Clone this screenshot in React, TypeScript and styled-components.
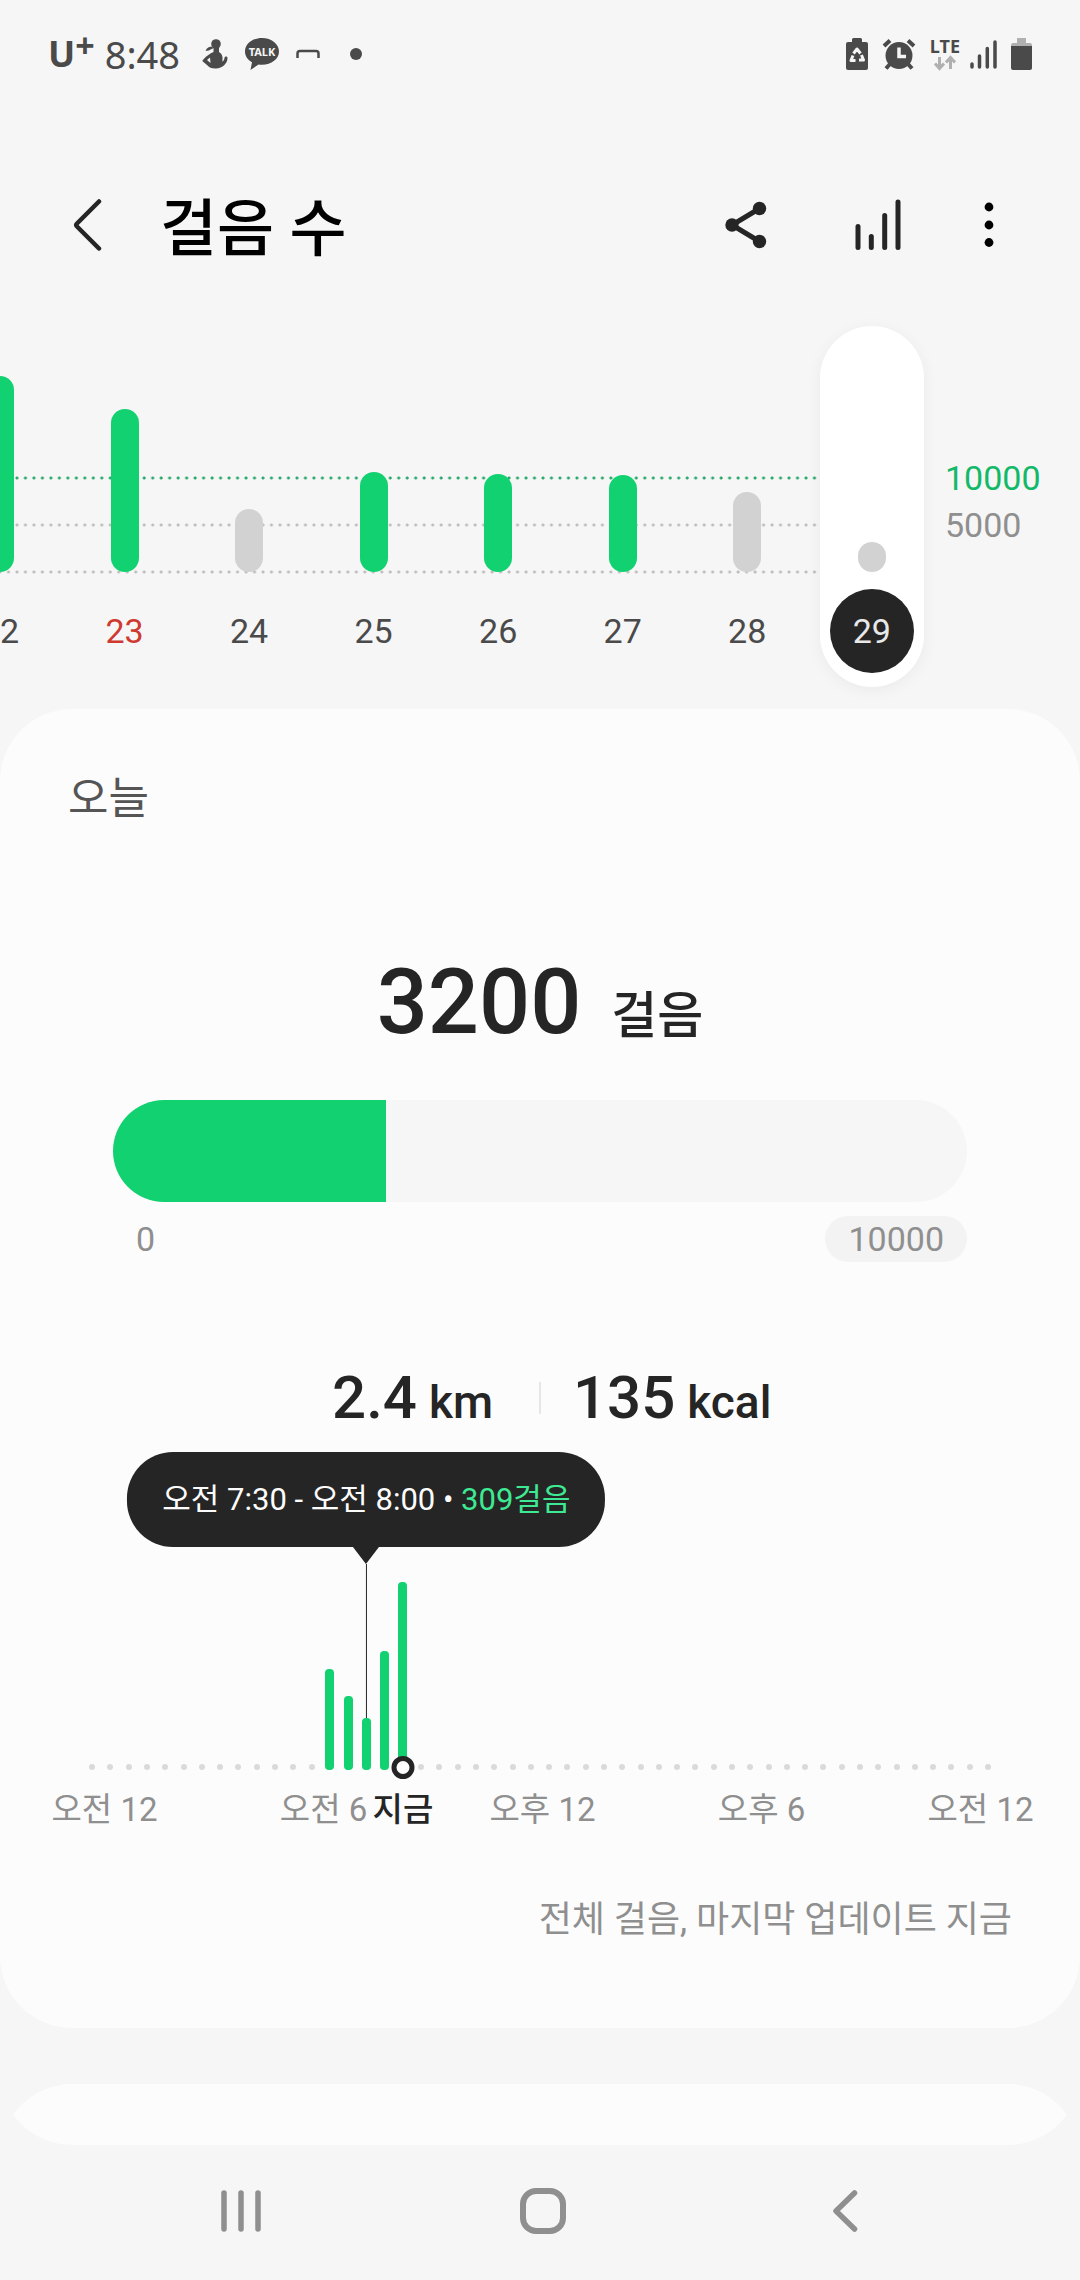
import React from "react";
import styled, { createGlobalStyle } from "styled-components";

const color = {
  page: "#f6f6f6",
  card: "#fcfcfc",
  ink: "#252525",
  status: "#4a4a4a",
  muted: "#8f8f8f",
  bar: "#12d170",
  barIdle: "#d2d2d2",
  goal: "#12b968",
  sunday: "#cf3a30",
};

const GlobalStyle = createGlobalStyle`
  *, *::before, *::after { box-sizing: border-box; }
  body {
    margin: 0;
    background: ${color.page};
    color: ${color.ink};
    font-family: Roboto, "Noto Sans CJK KR", sans-serif;
  }
  button {
    margin: 0;
    padding: 0;
    border: 0;
    background: none;
    color: inherit;
    font: inherit;
    cursor: pointer;
  }
  h1, h2, p { margin: 0; }
  svg { display: block; }
`;

const Screen = styled.div`
  display: flex;
  flex-direction: column;
  height: 100vh;
  overflow: hidden;
`;

/* Status bar */

const StatusBar = styled.div`
  display: flex;
  flex: none;
  align-items: center;
  justify-content: space-between;
  height: 108px;
  padding: 0 48px;
  color: ${color.status};
  font-family: "Noto Sans", sans-serif;
`;

const StatusGroup = styled.div<{ $gap: number }>`
  display: flex;
  align-items: center;
  gap: ${(p) => p.$gap}px;
`;

const Carrier = styled.span`
  display: flex;
  align-items: flex-start;
  font-size: 36px;
  font-weight: 700;
  line-height: 36px;
`;

const CarrierPlus = styled.span`
  font-size: 34px;
  line-height: 18px;
`;

const Clock = styled.span`
  margin-right: 6px;
  font-size: 38px;
  line-height: 40px;
`;

const MoreNotices = styled.span`
  margin-left: 14px;
`;

const Network = styled.span`
  display: flex;
  flex-direction: column;
  align-items: center;
  margin-right: -4px;
  font-size: 18px;
  font-weight: 700;
  line-height: 18px;
`;

/* App bar */

const AppBar = styled.header`
  display: flex;
  flex: none;
  align-items: center;
  padding: 81px 55px 65px 52px;
`;

const IconButton = styled.button`
  display: flex;
  align-items: center;
  justify-content: center;
  width: 72px;
  height: 72px;
`;

const Title = styled.h1`
  flex: 1;
  margin-left: 36px;
  padding-top: 10px;
  color: #000;
  font-size: 62px;
  font-weight: 500;
  line-height: 62px;
`;

const Actions = styled.div`
  display: flex;
  gap: 60px;

  & > :last-child {
    margin-left: -21px;
  }
`;

/* Daily chart */

const Daily = styled.section`
  display: flex;
  flex: none;
  margin-bottom: 22px;
`;

const Plot = styled.div`
  position: relative;
  display: flex;
  flex: 1;
  justify-content: flex-end;
  min-width: 0;
`;

const GridLine = styled.span<{ $tone: string }>`
  position: absolute;
  left: -2px;
  right: calc(100% / 15);
  height: 4px;
  background-image: radial-gradient(circle at 2px 2px, ${(p) => p.$tone} 1px, transparent 2px);
  background-size: calc(100% / 103) 4px;
`;

const Day = styled.button`
  position: relative;
  display: flex;
  flex: none;
  justify-content: center;
  width: calc(100% / 7.5);
`;

const DayPill = styled.span<{ $selected: boolean }>`
  display: flex;
  flex-direction: column;
  align-items: center;
  width: 104px;
  padding-bottom: 14px;
  border-radius: 52px;
  background: ${(p) => (p.$selected ? "#fff" : "transparent")};
  box-shadow: ${(p) => (p.$selected ? "0 3px 16px rgba(0, 0, 0, 0.05)" : "none")};
`;

const DayTrack = styled.span`
  display: flex;
  align-items: flex-end;
  height: 246px;
  margin-bottom: 17px;
`;

const DayBar = styled.span<{ $reached: boolean }>`
  width: 28px;
  border-radius: 14px;
  background: ${(p) => (p.$reached ? color.bar : color.barIdle)};
`;

const DayLabel = styled.span<{ $selected: boolean; $sunday: boolean }>`
  width: 84px;
  height: 84px;
  border-radius: 50%;
  background: ${(p) => (p.$selected ? color.ink : "transparent")};
  color: ${(p) => (p.$selected ? "#e8e8e8" : p.$sunday ? color.sunday : color.status)};
  font-size: 34px;
  line-height: 84px;
  text-align: center;
`;

const Scale = styled.div`
  width: 146px;
  padding: 129px 0 0 11px;
  color: ${color.muted};
  font-size: 34px;
  line-height: 47px;
`;

const GoalValue = styled.div`
  color: ${color.goal};
`;

/* Cards */

const Cards = styled.main`
  flex: 1;
  min-height: 0;
  overflow: hidden auto;
  scrollbar-width: none;
  border-radius: 0 0 72px 72px;
`;

const Card = styled.section`
  padding: 60px 0 83px;
  border-radius: 72px;
  background: ${color.card};
`;

const NextCard = styled.section`
  min-height: 320px;
  margin-top: 56px;
  border-radius: 72px;
  background: ${color.card};
`;

const CardTitle = styled.h2`
  padding-left: 68px;
  color: #555;
  font-size: 44px;
  font-weight: 400;
  line-height: 60px;
`;

const Total = styled.p`
  display: flex;
  align-items: baseline;
  justify-content: center;
  gap: 30px;
  margin-top: 124px;
  font-size: 90px;
  font-weight: 500;
  line-height: 100px;
`;

const TotalUnit = styled.span`
  font-size: 50px;
  line-height: 50px;
`;

const Goal = styled.div`
  margin: 47px 113px 0;
`;

const GoalTrack = styled.div`
  height: 102px;
  overflow: hidden;
  border-radius: 51px;
  background: #f6f6f6;
`;

const GoalFill = styled.div`
  height: 100%;
  background: ${color.bar};
`;

const GoalRange = styled.div`
  display: flex;
  justify-content: space-between;
  margin-top: 14px;
  padding-left: 23px;
  color: ${color.muted};
  font-size: 34px;
  line-height: 46px;
`;

const GoalTarget = styled.span`
  padding: 0 23px;
  border-radius: 23px;
  background: #f3f3f3;
`;

const Stats = styled.div`
  display: grid;
  grid-template-columns: 1fr 2px 1fr;
  align-items: center;
  margin-top: 106px;
`;

const Stat = styled.p<{ $side: "left" | "right" }>`
  padding: ${(p) => (p.$side === "left" ? "0 46px 0 0" : "0 0 0 32px")};
  font-size: 60px;
  font-weight: 500;
  line-height: 60px;
  text-align: ${(p) => (p.$side === "left" ? "right" : "left")};
`;

const StatUnit = styled.span`
  margin-left: 12px;
  font-size: 46px;
  line-height: 46px;
`;

const StatRule = styled.span`
  height: 32px;
  background: #e6e6e6;
`;

/* Half-hour timeline */

const Timeline = styled.div`
  display: flex;
  height: 318px;
  margin: 24px 83px 0;
`;

const Slot = styled.div`
  position: relative;
  display: flex;
  flex: 1;
  align-items: flex-end;
  justify-content: center;
`;

const SlotDot = styled.span`
  width: 6px;
  height: 6px;
  border-radius: 50%;
  background: #dadada;
`;

const SlotBar = styled.span`
  position: relative;
  flex: none;
  width: 9px;
  border-radius: 4px;
  background: ${color.bar};
`;

const Callout = styled.div`
  position: absolute;
  top: 0;
  bottom: 40px;
  left: 50%;
  display: flex;
  flex-direction: column;
  align-items: center;
  transform: translateX(-50%);
`;

const Bubble = styled.div`
  padding: 0 35px;
  border-radius: 46px;
  background: ${color.ink};
  color: #fcfcfc;
  font-size: 31px;
  line-height: 95px;
  white-space: nowrap;
`;

const BubbleSteps = styled.span`
  color: #3ee993;
`;

const BubbleArrow = styled.span`
  border: solid transparent;
  border-width: 17px 13px 0;
  border-top-color: ${color.ink};
`;

const Pointer = styled.span`
  flex: 1;
  width: 1px;
  background: ${color.ink};
`;

const NowRing = styled.span`
  position: absolute;
  bottom: -9px;
  left: 50%;
  width: 23px;
  height: 23px;
  border: 5px solid ${color.ink};
  border-radius: 50%;
  background: #fff;
  transform: translateX(-50%);
`;

const NowLabel = styled.span`
  position: absolute;
  top: calc(100% + 20px);
  left: 50%;
  font-size: 33px;
  font-weight: 500;
  line-height: 40px;
  white-space: nowrap;
  transform: translateX(-50%);
`;

const Hours = styled.div`
  display: grid;
  grid-template-columns: repeat(5, 1fr);
  margin: 20px -10px 0 -5px;
  color: ${color.muted};
  font-size: 33px;
  line-height: 40px;
  text-align: center;
`;

const Updated = styled.p`
  margin-top: 65px;
  padding: 0 68px;
  color: ${color.muted};
  font-size: 36px;
  line-height: 50px;
  text-align: right;
`;

/* System navigation */

const NavBar = styled.nav`
  display: grid;
  flex: none;
  grid-template-columns: repeat(3, 1fr);
  align-items: center;
  height: 135px;
  padding: 0 84px 3px 90px;
  color: ${color.muted};
`;

const NavButton = styled.button`
  display: flex;
  justify-content: center;
  padding: 20px;
`;

const goal = 10000;
const goalHeight = 94;

const days = [
  { day: 22, steps: 20850 },
  { day: 23, steps: 17340, sunday: true },
  { day: 24, steps: 6700 },
  { day: 25, steps: 10640 },
  { day: 26, steps: 10430 },
  { day: 27, steps: 10320 },
  { day: 28, steps: 8510 },
  { day: 29, steps: 3200 },
];
const today = 29;
const todaySteps = 3200;

const gridLines = [
  { value: 10000, tone: "#27a96b" },
  { value: 5000, tone: "#bdbdbd" },
  { value: 0, tone: "#bdbdbd" },
];

/* Bar heights by half-hour slot */
const slotHeights: Record<number, number> = { 13: 101, 14: 74, 15: 52, 16: 119, 17: 188 };
const slotCount = 50;
const pickedSlot = 15;
const nowSlot = 17;

const hours = ["오전 12", "오전 6", "오후 12", "오후 6", "오전 12"];

const HealthIcon = () => (
  <svg width="26" height="30" viewBox="0 0 26 30" fill="currentColor" aria-hidden="true">
    <circle cx="14" cy="5" r="4.800" />
    <path d="M11.500 8h5.500v5c2.500 1.500 4 4 3.500 8l-.5 1.500c1.500-.5 2.500-2 2.500-3.500 0-2 3-2 3 0 0 5.500-5 10-11.500 10.500-4 .2-7-1-9-3.500L.8 22.500c-.8-1 0-1.500 1-2.500C4.500 17 8 14.500 11.500 13z" />
    <path d="M3.500 11.500C5 9 7 7.500 10.500 7.500L11 9.500C8.500 10 7 12.500 3.500 11.500z" />
    <path d="M5 21l3-2.500.5 5.500z" fill={color.page} />
  </svg>
);

const TalkIcon = () => (
  <svg width="36" height="34" viewBox="0 0 36 34" aria-hidden="true">
    <path
      d="M18 1C8.500 1 1 7 1 14.500c0 4.500 2.700 8.300 7 10.700L6.500 33l8-5.600c1.200.2 2.300.3 3.500.3 9.500 0 17-5.900 17-13.200S27.500 1 18 1z"
      fill="currentColor"
    />
    <text x="18" y="19" fill={color.page} fontFamily="Noto Sans" fontSize="11" fontWeight="700" textAnchor="middle">
      TALK
    </text>
  </svg>
);

const BracketIcon = () => (
  <svg width="24" height="10" viewBox="0 0 24 10" fill="none" stroke="currentColor" strokeWidth="2.500" aria-hidden="true">
    <path d="M1.500 9V4.500q0-2.500 2.500-2.500h16q2.500 0 2.500 2.500V9" />
  </svg>
);

const DotIcon = () => (
  <svg width="12" height="12" viewBox="0 0 12 12" fill="currentColor" aria-hidden="true">
    <circle cx="6" cy="6" r="6" />
  </svg>
);

const BatteryCareIcon = () => (
  <svg width="22" height="32" viewBox="0 0 22 32" aria-hidden="true">
    <path d="M6 1.500A1.500 1.500 0 0 1 7.500 0h7A1.500 1.500 0 0 1 16 1.500V4h4a2 2 0 0 1 2 2v24a2 2 0 0 1-2 2H2a2 2 0 0 1-2-2V6a2 2 0 0 1 2-2h4z" fill="currentColor" />
    <path
      d="M7.500 15.500l3.500-4.500 3.500 4.500M15.500 17l2 5h-4.500M9.500 22.500H5l2-5"
      fill="none"
      stroke={color.page}
      strokeWidth="3"
      strokeLinejoin="round"
    />
  </svg>
);

const AlarmIcon = () => (
  <svg width="34" height="32" viewBox="0 0 34 32" fill="none" stroke="currentColor" aria-hidden="true">
    <circle cx="17" cy="17.500" r="13.500" fill="currentColor" stroke="none" />
    <path d="M2 8l6-5.500M32 8l-6-5.500" strokeWidth="4" />
    <path d="M8 26l-4 4.500M26 26l4 4.500" strokeWidth="4" />
    <path d="M17 9.500v9h7" stroke={color.page} strokeWidth="3.500" />
  </svg>
);

const DataArrowsIcon = () => (
  <svg width="24" height="16" viewBox="0 0 24 16" fill="none" stroke="#b0b0b0" strokeWidth="3" aria-hidden="true">
    <path d="M6.500 2v11M2 8.500l4.500 5 4.500-5M17.500 14V3M13 7.500l4.500-5 4.500 5" />
  </svg>
);

const SignalIcon = () => (
  <svg width="27" height="30" viewBox="0 0 27 30" stroke="currentColor" strokeWidth="3.500" strokeLinecap="round" aria-hidden="true">
    <path d="M2 25v3M9.500 17v11M17.300 9.500V28M25 3v25" />
  </svg>
);

const BatteryIcon = () => (
  <svg width="21" height="32" viewBox="0 0 21 32" aria-hidden="true">
    <path d="M6 0h9v5h4a2 2 0 0 1 2 2v1H0V7a2 2 0 0 1 2-2h4z" fill="#b0b0b0" />
    <path d="M0 8h21v22a2 2 0 0 1-2 2H2a2 2 0 0 1-2-2z" fill="currentColor" />
  </svg>
);

const BackIcon = () => (
  <svg width="30" height="54" viewBox="0 0 30 54" fill="none" stroke={color.ink} strokeWidth="4.500" strokeLinecap="round" strokeLinejoin="round" aria-hidden="true">
    <path d="M26 3.500L4 25.500q-1.500 1.500 0 3L26 50.500" />
  </svg>
);

const ShareIcon = () => (
  <svg width="42" height="48" viewBox="0 0 42 48" fill={color.ink} aria-hidden="true">
    <path d="M34.500 7.500L7 24l27.500 16.500" fill="none" stroke={color.ink} strokeWidth="5" />
    <circle cx="34.500" cy="7.500" r="6.700" />
    <circle cx="7" cy="24" r="6.700" />
    <circle cx="34.500" cy="40.500" r="6.700" />
  </svg>
);

const TrendIcon = () => (
  <svg width="46" height="52" viewBox="0 0 46 52" stroke={color.ink} strokeWidth="5" strokeLinecap="round" aria-hidden="true">
    <path d="M3 27.500v21M16.300 37.500v11M29.700 16.500v32M43 3v45.500" />
  </svg>
);

const MoreIcon = () => (
  <svg width="10" height="46" viewBox="0 0 10 46" fill="#000" aria-hidden="true">
    <circle cx="5" cy="5" r="4.400" />
    <circle cx="5" cy="23" r="4.400" />
    <circle cx="5" cy="40.500" r="4.400" />
  </svg>
);

const RecentsIcon = () => (
  <svg width="42" height="44" viewBox="0 0 42 44" stroke="currentColor" strokeWidth="5.500" strokeLinecap="round" aria-hidden="true">
    <path d="M4 4v36M21 4v36M38 4v36" />
  </svg>
);

const HomeIcon = () => (
  <svg width="46" height="46" viewBox="0 0 46 46" fill="none" stroke="currentColor" strokeWidth="6" aria-hidden="true">
    <rect x="3" y="3" width="40" height="40" rx="13" />
  </svg>
);

const NavBackIcon = () => (
  <svg width="26" height="44" viewBox="0 0 26 44" fill="none" stroke="currentColor" strokeWidth="5.500" strokeLinecap="round" strokeLinejoin="round" aria-hidden="true">
    <path d="M22.500 4L4 22l18.500 18" />
  </svg>
);

const DailyChart = () => (
  <Daily aria-label="일별 걸음 수">
    <Plot>
      {gridLines.map((line) => (
        <GridLine
          key={line.value}
          $tone={line.tone}
          style={{ bottom: 113 + (line.value / goal) * goalHeight }}
        />
      ))}
      {days.map(({ day, steps, sunday }) => (
        <Day key={day} type="button">
          <DayPill $selected={day === today}>
            <DayTrack>
              <DayBar $reached={steps >= goal} style={{ height: Math.round((steps / goal) * goalHeight) }} />
            </DayTrack>
            <DayLabel $selected={day === today} $sunday={Boolean(sunday)}>
              {day}
            </DayLabel>
          </DayPill>
        </Day>
      ))}
    </Plot>
    <Scale>
      <GoalValue>10000</GoalValue>
      <div>5000</div>
    </Scale>
  </Daily>
);

const TimelineSlot = ({ index }: { index: number }) => {
  const height = slotHeights[index];
  return (
    <Slot>
      {index === pickedSlot && (
        <Callout>
          <Bubble>
            오전 7:30 - 오전 8:00 • <BubbleSteps>309걸음</BubbleSteps>
          </Bubble>
          <BubbleArrow />
          <Pointer />
        </Callout>
      )}
      {height ? <SlotBar style={{ height }} /> : <SlotDot />}
      {index === nowSlot && (
        <>
          <NowRing />
          <NowLabel>지금</NowLabel>
        </>
      )}
    </Slot>
  );
};

export default function App() {
  return (
    <>
      <GlobalStyle />
      <Screen>
        <StatusBar>
          <StatusGroup $gap={16}>
            <StatusGroup $gap={10}>
              <Carrier>
                U<CarrierPlus>+</CarrierPlus>
              </Carrier>
              <Clock>8:48</Clock>
            </StatusGroup>
            <HealthIcon />
            <TalkIcon />
            <BracketIcon />
            <MoreNotices>
              <DotIcon />
            </MoreNotices>
          </StatusGroup>
          <StatusGroup $gap={14}>
            <BatteryCareIcon />
            <AlarmIcon />
            <Network>
              LTE
              <DataArrowsIcon />
            </Network>
            <SignalIcon />
            <BatteryIcon />
          </StatusGroup>
        </StatusBar>

        <AppBar>
          <IconButton type="button" aria-label="뒤로">
            <BackIcon />
          </IconButton>
          <Title>걸음 수</Title>
          <Actions>
            <IconButton type="button" aria-label="공유">
              <ShareIcon />
            </IconButton>
            <IconButton type="button" aria-label="통계">
              <TrendIcon />
            </IconButton>
            <IconButton type="button" aria-label="더보기">
              <MoreIcon />
            </IconButton>
          </Actions>
        </AppBar>

        <DailyChart />

        <Cards>
          <Card>
            <CardTitle>오늘</CardTitle>
            <Total>
              {todaySteps}
              <TotalUnit>걸음</TotalUnit>
            </Total>
            <Goal>
              <GoalTrack role="progressbar" aria-valuenow={todaySteps} aria-valuemin={0} aria-valuemax={goal}>
                <GoalFill style={{ width: `${(todaySteps / goal) * 100}%` }} />
              </GoalTrack>
              <GoalRange>
                <span>0</span>
                <GoalTarget>{goal}</GoalTarget>
              </GoalRange>
            </Goal>
            <Stats>
              <Stat $side="left">
                2.4<StatUnit>km</StatUnit>
              </Stat>
              <StatRule />
              <Stat $side="right">
                135<StatUnit>kcal</StatUnit>
              </Stat>
            </Stats>
            <Timeline>
              {Array.from({ length: slotCount }, (_, index) => (
                <TimelineSlot key={index} index={index} />
              ))}
            </Timeline>
            <Hours>
              {hours.map((hour, index) => (
                <span key={index}>{hour}</span>
              ))}
            </Hours>
            <Updated>전체 걸음, 마지막 업데이트 지금</Updated>
          </Card>
          <NextCard />
        </Cards>

        <NavBar>
          <NavButton type="button" aria-label="최근 앱">
            <RecentsIcon />
          </NavButton>
          <NavButton type="button" aria-label="홈">
            <HomeIcon />
          </NavButton>
          <NavButton type="button" aria-label="이전">
            <NavBackIcon />
          </NavButton>
        </NavBar>
      </Screen>
    </>
  );
}
